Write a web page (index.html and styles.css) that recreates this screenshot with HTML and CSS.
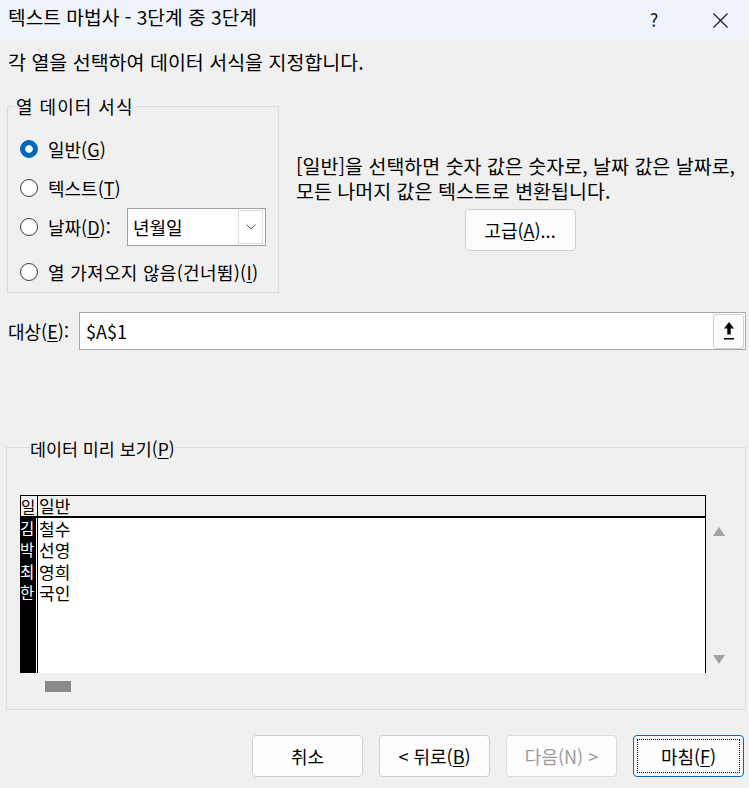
FILE: index.html
```html
<!DOCTYPE html>
<html lang="ko">
<head>
    <meta charset="utf-8">
    <title>텍스트 마법사 - 3단계 중 3단계</title>
    <link rel="stylesheet" href="styles.css">
</head>
<body>
<div class="dialog">
    <!-- Title bar -->
    <div class="titlebar">
        <span class="title">텍스트 마법사 - 3단계 중 3단계</span>
        <span class="help">?</span>
        <span class="close">
            <svg width="15" height="15" viewBox="0 0 15 15"><path d="M0.5 0.5L14.5 14.5M14.5 0.5L0.5 14.5" stroke="#1a1a1a" stroke-width="1.2"/></svg>
        </span>
    </div>

    <p class="intro">각 열을 선택하여 데이터 서식을 지정합니다.</p>

    <!-- Column data format -->
    <div class="format-row">
        <fieldset class="group format-group">
            <legend>열 데이터 서식</legend>
            <div class="opts">
                <label class="opt"><span class="radio checked"></span>일반(<u>G</u>)</label>
                <label class="opt"><span class="radio"></span>텍스트(<u>T</u>)</label>
                <label class="opt">
                    <span class="radio"></span>날짜(<u>D</u>):
                    <span class="combo">
                        <span class="combo-value">년월일</span>
                        <span class="combo-btn">
                            <svg width="10" height="6" viewBox="0 0 10 6"><path d="M0.5 0.5L5 5L9.5 0.5" fill="none" stroke="#5a5a5a"/></svg>
                        </span>
                    </span>
                </label>
                <label class="opt skip"><span class="radio"></span>열 가져오지 않음(건너뜀)(<u>I</u>)</label>
            </div>
        </fieldset>
        <div class="format-help">
            <p>[일반]을 선택하면 숫자 값은 숫자로, 날짜 값은 날짜로,<br>모든 나머지 값은 텍스트로 변환됩니다.</p>
            <button class="btn advanced">고급(<u>A</u>)...</button>
        </div>
    </div>

    <!-- Destination -->
    <div class="target-row">
        <span class="target-label">대상(<u>E</u>):</span>
        <div class="ref-input">
            <span>$A$1</span>
            <span class="ref-btn">
                <svg width="12" height="18" viewBox="0 0 12 18">
                    <path d="M6 0L11 6.5H7.7V12.5H4.3V6.5H1Z" fill="#000"/>
                    <rect x="1" y="16" width="10" height="1.5" fill="#000"/>
                </svg>
            </span>
        </div>
    </div>

    <!-- Data preview -->
    <fieldset class="group preview-group">
        <legend>데이터 미리 보기(<u>P</u>)</legend>
        <div class="preview">
            <div class="grid">
                <div class="grid-head">
                    <span class="col-a">일</span>
                    <span class="col-b">일반</span>
                </div>
                <div class="grid-body">
                    <div class="col-a">
                        <div>김</div>
                        <div>박</div>
                        <div>최</div>
                        <div>한</div>
                    </div>
                    <div class="col-b">
                        <div>철수</div>
                        <div>선영</div>
                        <div>영희</div>
                        <div>국인</div>
                    </div>
                </div>
            </div>
            <div class="vscroll">
                <svg width="12" height="9" viewBox="0 0 12 9"><path d="M6 0L12 9H0Z" fill="#a3a3a3"/></svg>
                <svg width="12" height="9" viewBox="0 0 12 9"><path d="M0 0H12L6 9Z" fill="#a3a3a3"/></svg>
            </div>
        </div>
        <div class="hscroll"><span class="thumb"></span></div>
    </fieldset>

    <!-- Wizard buttons -->
    <div class="buttons">
        <button class="btn">취소</button>
        <button class="btn">&lt; 뒤로(<u>B</u>)</button>
        <button class="btn" disabled>다음(N) &gt;</button>
        <button class="btn primary">마침(<u>F</u>)</button>
    </div>
</div>
</body>
</html>
```

FILE: styles.css
```css
body {
    margin: 0;
    background: #f0f0f0;
    font-family: "Noto Sans CJK KR", "Noto Sans", sans-serif;
    font-size: 18px;
    color: #000;
}
u { text-underline-offset: 2px; }

.dialog { width: 749px; height: 788px; overflow: hidden; }

/* Title bar */
.titlebar {
    display: flex;
    align-items: center;
    height: 40px;
    box-sizing: border-box;
    padding: 0 6px 6px 8px;
    background: #eef4f9;
}
.title { flex: 1; line-height: 26px; font-size: 19.2px; }
.help { width: 46px; text-align: center; margin-right: 20px; font-size: 18px; color: #1a1a1a; line-height: 26px; padding-top: 4px; }
.close { width: 46px; display: flex; justify-content: center; padding-top: 6px; }

.intro { margin: 0; padding: 10px 8px 0; line-height: 24px; font-size: 19.5px; }

/* Group boxes */
.group {
    margin: 0;
    padding: 0;
    border: 1px solid #dcdcdc;
    min-width: 0;
    box-sizing: border-box;
}
.group legend { padding: 0 2px; line-height: 20px; }

.format-row { display: flex; align-items: flex-start; margin-top: 22px; }
.format-group { margin-left: 7px; width: 272px; }
.format-group legend { margin-left: 6px; letter-spacing: 1px; }
.opts { padding: 13px 12px 1px 12px; }
.opt { display: flex; align-items: center; height: 39px; white-space: nowrap; }
.opt.skip { margin-top: 6px; letter-spacing: 0.3px; }

.radio {
    flex: none;
    width: 18px;
    height: 18px;
    margin-right: 10px;
    border: 1px solid #3c3c3c;
    border-radius: 50%;
    box-sizing: border-box;
    background: #fff;
}
.radio.checked {
    border-color: #0067c0;
    background: radial-gradient(circle, #fff 0 3.4px, #0067c0 4.2px);
}

.combo {
    margin-left: auto;
    width: 139px;
    height: 38px;
    display: flex;
    align-items: center;
    box-sizing: border-box;
    border: 1px solid #a0a0a0;
    background: #fff;
    letter-spacing: 0;
}
.combo-value { padding-left: 5px; }
.combo-btn {
    margin-left: auto;
    margin-right: 2px;
    width: 25px;
    height: 34px;
    box-sizing: border-box;
    border: 1px solid #dadada;
    display: flex;
    align-items: center;
    justify-content: center;
}

.format-help { flex: 1; padding: 0 5px 0 17px; margin-top: 57px; }
.format-help p { margin: 0; line-height: 25px; font-size: 19.5px; }

/* Buttons */
.btn {
    width: 111px;
    height: 42px;
    padding: 0;
    font: inherit;
    color: #000;
    background: #fdfdfd;
    border: 1px solid #d0d0d0;
    border-radius: 4px;
}
.btn:disabled { color: #9a9a9a; border-color: #dcdcdc; }
.btn.primary { border-color: #0067c0; outline: 1px dotted #000; outline-offset: -5px; }
.advanced { display: block; margin: 6px auto 0; }

/* Destination */
.target-row { display: flex; align-items: center; margin-top: 19px; padding-left: 8px; }
.target-label { width: 71px; }
.ref-input {
    width: 667px;
    height: 38px;
    display: flex;
    align-items: center;
    box-sizing: border-box;
    padding-left: 6px;
    border: 1px solid #a8a8a8;
    background: #fff;
}
.ref-btn {
    margin-left: auto;
    margin-right: 1px;
    width: 31px;
    height: 35px;
    box-sizing: border-box;
    border: 1px solid #d0d0d0;
    border-radius: 3px;
    background: #fbfbfb;
    display: flex;
    align-items: center;
    justify-content: center;
}

/* Data preview */
.preview-group { margin: 85px 0 0 6px; width: 740px; padding: 36px 0 17px 13px; }
.preview-group legend { margin-left: 10px; padding: 4px 0 0; font-size: 17.4px; }
.preview { display: flex; }
.grid { width: 686px; font-size: 17px; }
.grid-head {
    display: flex;
    height: 20px;
    line-height: 20px;
    border: 1px solid #000;
    border-bottom-width: 2px;
    background: #f0f0f0;
}
.grid-head .col-a { width: 16px; font-size: 15.5px; border-right: 1px solid #000; }
.grid-head .col-b { padding-left: 1px; }
.grid-body {
    display: flex;
    height: 155px;
    line-height: 21.3px;
    border-right: 1px solid #000;
    background: #fff;
}
.grid-body .col-a { width: 16px; font-size: 15.5px; background: #000; color: #fff; }
.grid-body .col-b { margin-left: 1px; padding-left: 1px; border-left: 1px solid #000; }

.vscroll {
    display: flex;
    flex-direction: column;
    justify-content: space-between;
    padding: 32px 0 9px 7px;
}
.hscroll { padding: 8px 0 0 25px; }
.thumb { display: block; width: 26px; height: 11px; background: #8a8a8a; }

.buttons { display: flex; justify-content: flex-end; gap: 16px; padding-right: 5px; margin-top: 25px; }
```
